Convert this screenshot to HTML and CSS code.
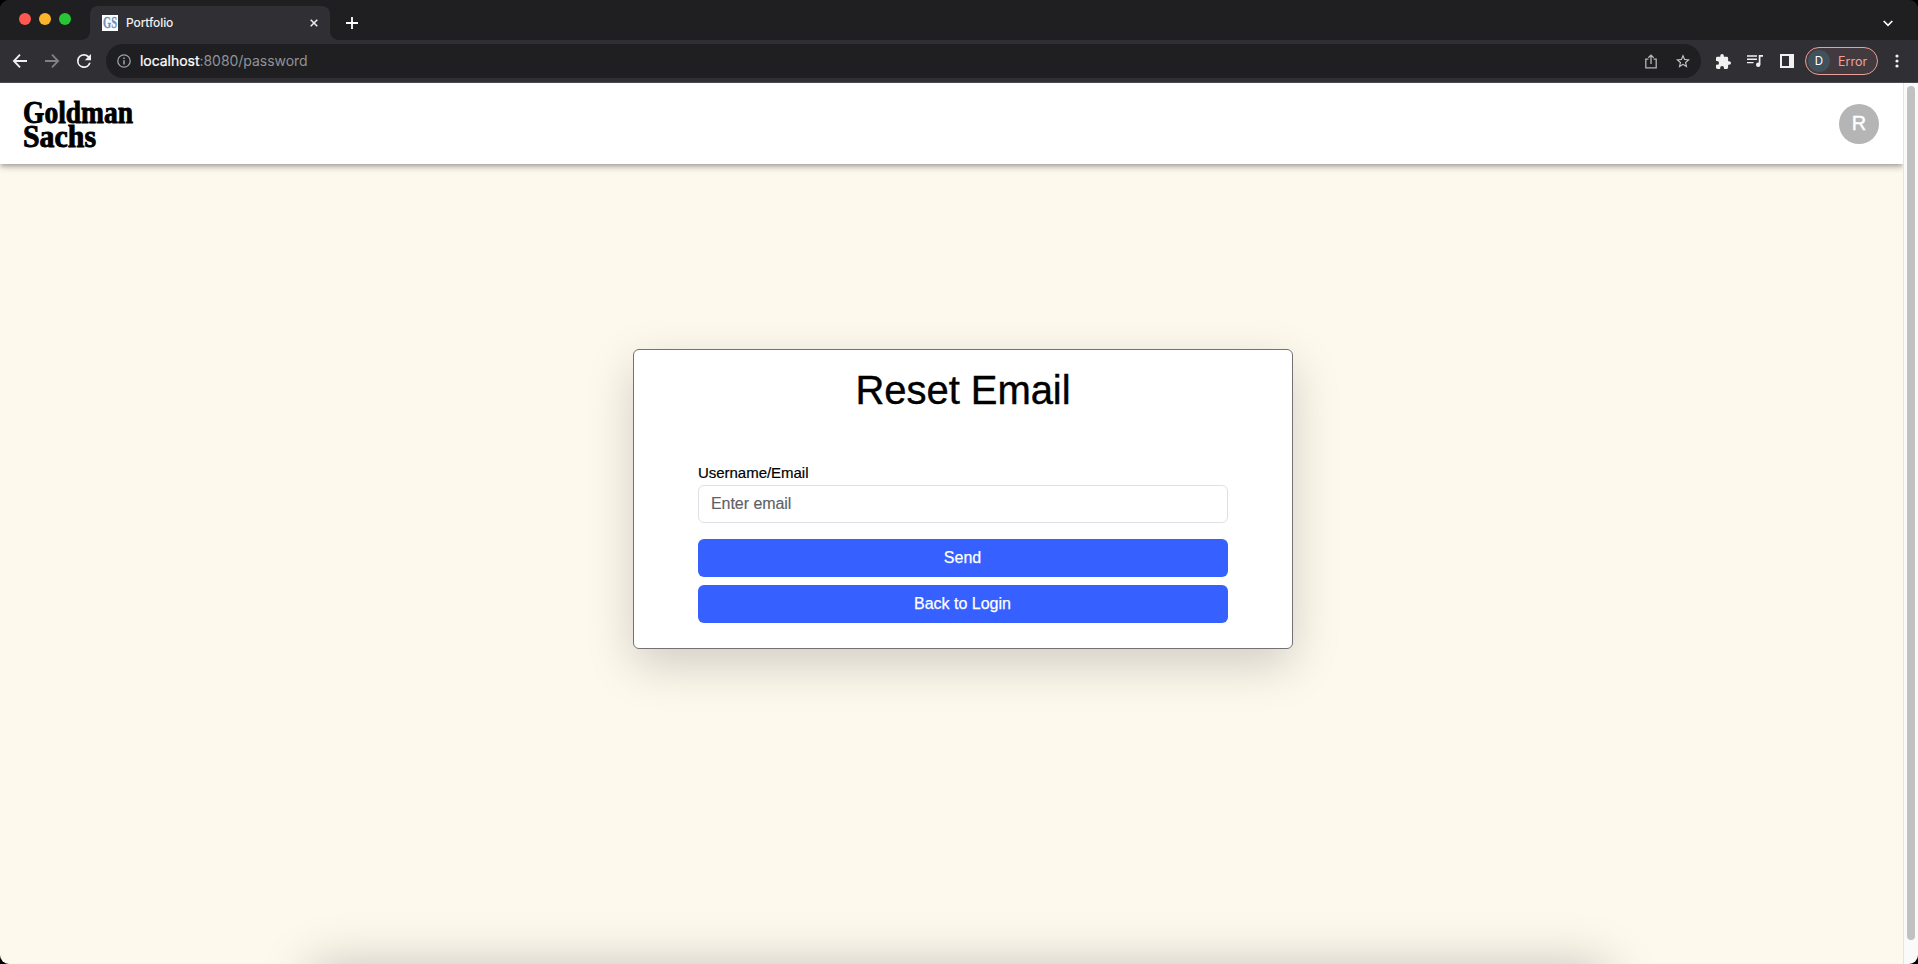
FILE: index.html
```html
<!DOCTYPE html>
<html lang="en">
<head>
<meta charset="utf-8">
<title>Portfolio</title>
<link rel="stylesheet" href="styles.css">
</head>
<body>
<div class="window">
  <div class="tabstrip">
    <div class="lights"><span class="light red"></span><span class="light yellow"></span><span class="light green"></span></div>
    <div class="tab">
      <svg class="favicon" viewBox="0 0 16 16"><rect width="16" height="16" fill="#fff"/><text x="1" y="13.4" textLength="14" lengthAdjust="spacingAndGlyphs" class="favicon-text">GS</text></svg>
      <span class="tab-title">Portfolio</span>
      <svg class="tab-close" viewBox="0 0 8 8"><path d="M.7.7l6.6 6.6M7.3.7L.7 7.3" stroke="#e8eaed" stroke-width="1.6"/></svg>
    </div>
    <svg class="new-tab" viewBox="0 0 12 12"><path d="M6 0v12M0 6h12" stroke="#fff" stroke-width="1.8"/></svg>
    <svg class="chevron" viewBox="0 0 10 7"><path d="M.7 1L5 5.3 9.3 1" fill="none" stroke="#fff" stroke-width="1.7"/></svg>
  </div>
  <div class="toolbar">
    <svg class="nav-icon" viewBox="0 0 14 14"><path d="M14 7H1.2M7 .7L.9 7 7 13.3" fill="none" stroke="#f1f1f2" stroke-width="1.8"/></svg>
    <svg class="nav-icon" viewBox="0 0 14 14"><path d="M0 7h12.8M7 .7L13.1 7 7 13.3" fill="none" stroke="#828286" stroke-width="1.8"/></svg>
    <svg class="nav-icon reload" viewBox="4 4 16 16"><path fill="#f1f1f2" d="M17.65 6.35A7.96 7.96 0 0 0 12 4a8 8 0 1 0 7.73 10h-2.08A6 6 0 1 1 12 6c1.66 0 3.14.69 4.22 1.78L13 11h7V4z"/></svg>
    <div class="omnibox">
      <svg class="info" viewBox="0 0 14 14"><circle cx="7" cy="7" r="6.2" fill="none" stroke="#9aa0a6" stroke-width="1.3"/><path d="M7 6.2v4.2M7 3.5v1.6" stroke="#9aa0a6" stroke-width="1.6"/></svg>
      <span class="url"><span class="host">localhost</span>:8080/password</span>
      <svg class="share" viewBox="0 0 12 15"><path d="M3.4 5.2H.8v8.6h10.4V5.2H8.6M6 10V1.2M3.3 3.8L6 1.1l2.7 2.7" fill="none" stroke="#b4b5b8" stroke-width="1.3"/></svg>
      <svg class="star" viewBox="2 2 20 19"><path fill="#c4c5c8" d="M22 9.24l-7.19-.62L12 2 9.19 8.63 2 9.24l5.46 4.73L5.82 21 12 17.27 18.18 21l-1.63-7.03zM12 15.4l-3.76 2.27 1-4.28-3.32-2.88 4.38-.38L12 6.1l1.71 4.04 4.38.38-3.32 2.88 1 4.28z"/></svg>
    </div>
    <svg class="puzzle" viewBox="2 1 21 21"><path fill="#f1f1f2" d="M20.5 11H19V7a2 2 0 0 0-2-2h-4V3.5a2.5 2.5 0 0 0-5 0V5H4a2 2 0 0 0-2 2v3.8h1.5a2.7 2.7 0 0 1 0 5.4H2V20a2 2 0 0 0 2 2h3.8v-1.5a2.7 2.7 0 0 1 5.4 0V22H17a2 2 0 0 0 2-2v-4h1.5a2.5 2.5 0 0 0 0-5z"/></svg>
    <svg class="queue" viewBox="0 0 16 12"><path d="M0 1h10M0 4.3h10M0 7.6h6.5" stroke="#f1f1f2" stroke-width="1.4"/><path d="M12.6 9.6V.9H16" fill="none" stroke="#f1f1f2" stroke-width="1.7"/><circle cx="11.2" cy="9.7" r="2.2" fill="#f1f1f2"/></svg>
    <svg class="panel" viewBox="0 0 14 14"><path fill="#f1f1f2" fill-rule="evenodd" d="M0 0h14v14H0zM2 2v10h7V2z"/></svg>
    <div class="profile"><span class="initial">D</span><span class="error">Error</span></div>
    <svg class="more" viewBox="0 0 4 14"><circle cx="2" cy="2" r="1.6" fill="#f1f1f2"/><circle cx="2" cy="7" r="1.6" fill="#f1f1f2"/><circle cx="2" cy="12" r="1.6" fill="#f1f1f2"/></svg>
  </div>
  <div class="viewport">
    <div class="page">
      <header class="header">
        <svg class="logo" viewBox="0 0 112 52" role="img" aria-label="Goldman Sachs">
          <text x="0" y="24.5" textLength="110" lengthAdjust="spacingAndGlyphs">Goldman</text>
          <text x="0" y="48.5" textLength="73" lengthAdjust="spacingAndGlyphs">Sachs</text>
        </svg>
        <span class="avatar">R</span>
      </header>
      <main class="main">
        <form class="card">
          <h1 class="title">Reset Email</h1>
          <label class="label" for="email">Username/Email</label>
          <input class="field" id="email" type="email" placeholder="Enter email">
          <button class="button send" type="button">Send</button>
          <button class="button" type="button">Back to Login</button>
        </form>
      </main>
      <div class="next-panel"></div>
    </div>
    <div class="scrollbar"><div class="thumb"></div></div>
  </div>
</div>
</body>
</html>
```
FILE: styles.css
```css
* { box-sizing: border-box; }
html, body { margin: 0; height: 100%; overflow: hidden; background: #000; }
svg { display: block; flex: none; overflow: visible; }
.window { display: flex; flex-direction: column; width: 1918px; height: 964px; border-radius: 9px; overflow: hidden; background: #1f1f22; }

.tabstrip { display: flex; height: 40px; padding: 6px 25px 0 19px; background: #1f1f22; font-family: Inter, sans-serif; }
.lights { display: flex; gap: 8px; margin: 7px 19px 0 0; }
.light { width: 12px; height: 12px; border-radius: 50%; }
.red { background: #fe5850; }
.yellow { background: #fcb52a; }
.green { background: #28c537; }
.tab { position: relative; display: flex; align-items: center; width: 240px; height: 34px; padding: 0 12px; border-radius: 8px 8px 0 0; background: #303034; color: #f1f1f2; }
.tab::before, .tab::after { content: ""; position: absolute; bottom: 0; width: 8px; height: 8px; }
.tab::before { left: -8px; background: radial-gradient(circle at 0 0, #1f1f22 7.5px, #303034 8px); }
.tab::after { right: -8px; background: radial-gradient(circle at 100% 0, #1f1f22 7.5px, #303034 8px); }
.favicon { width: 16px; height: 16px; }
.favicon-text { font: bold 16px "Liberation Serif", serif; fill: #6f8fc0; stroke: #6f8fc0; stroke-width: .3px; }
.tab-title { margin-left: 8px; padding-bottom: 2px; font-size: 12px; font-weight: 500; letter-spacing: -.12px; }
.tab-close { width: 8px; height: 8px; margin-left: auto; }
.new-tab { width: 12px; height: 12px; margin: 11px 0 0 16px; }
.chevron { width: 10px; height: 7px; margin: 14px 0 0 auto; }

.toolbar { display: flex; align-items: center; height: 43px; padding: 1px 19px 1px 13px; background: #303034; border-bottom: 1px solid #4b4b4f; font-family: Inter, sans-serif; }
.nav-icon { width: 14px; height: 14px; margin-right: 18px; }
.reload { margin-right: 15px; }
.omnibox { display: flex; align-items: center; width: 1595px; height: 34px; padding: 0 11px; border-radius: 17px; background: #1f1f22; margin-right: 15px; }
.info { width: 14px; height: 14px; }
.url { margin-left: 9px; padding-bottom: 2px; color: #929297; font-size: 14px; letter-spacing: -.04px; }
.host { color: #fff; -webkit-text-stroke: .2px #fff; }
.share { width: 12px; height: 15px; margin-left: auto; }
.star { width: 14px; height: 14px; margin-left: 19px; }
.puzzle { width: 15px; height: 15px; }
.queue { width: 16px; height: 12px; margin-left: 16px; }
.panel { width: 14px; height: 14px; margin-left: 17px; }
.profile { display: flex; align-items: center; width: 73px; height: 28px; margin-left: 11px; padding-left: 2px; border: 1px solid #eb9f9a; border-radius: 14px; background: #423a3e; }
.initial { width: 22px; height: 22px; border-radius: 50%; background: #40525d; color: #fff; font-size: 11.5px; line-height: 22px; text-align: center; }
.error { margin-left: 8px; color: #f2a09a; font-size: 12.5px; }
.more { width: 4px; height: 14px; margin-left: auto; }

.viewport { display: flex; flex: 1; min-height: 0; }
.page { position: relative; flex: 1; display: flex; flex-direction: column; overflow: hidden; background: #fef9ed; font-family: "Liberation Sans", Arial, sans-serif; }
.header { position: relative; display: flex; align-items: center; justify-content: space-between; flex: none; height: 81px; padding: 0 24px 0 23px; background: #fff; box-shadow: 0 2px 4px -1px rgba(0,0,0,.2), 0 4px 5px rgba(0,0,0,.14), 0 1px 10px rgba(0,0,0,.12); }
.logo { width: 112px; height: 52px; font: bold 31px "Liberation Serif", serif; fill: #000; stroke: #000; stroke-width: .9px; }
.avatar { width: 40px; height: 40px; border-radius: 50%; background: #b5b5b5; color: #fff; font-size: 20px; line-height: 39px; text-align: center; -webkit-text-stroke: .4px #fff; }
.main { flex: 1; padding: 185px 0 0 633px; }
.card { display: flex; flex-direction: column; width: 660px; height: 300px; padding: 16px 64px; border: 1px solid #727272; border-radius: 6px; background: #fff; box-shadow: 0 16px 48px rgba(0,0,0,.175); }
.title { margin: 0 0 46px; font-size: 40px; font-weight: 400; line-height: 48px; text-align: center; letter-spacing: -.05px; -webkit-text-stroke: .4px #000; }
.label { height: 25px; font-size: 15px; line-height: 26px; letter-spacing: -.03px; -webkit-text-stroke: .2px #000; }
.field { width: 530px; height: 38px; margin: 0 0 16px; padding: 0 12px; border: 1px solid #dee0e6; border-radius: 6px; background: #fff; font: 16px "Liberation Sans", Arial, sans-serif; letter-spacing: -.05px; }
.field::placeholder { color: #606164; opacity: 1; -webkit-text-stroke: .15px #606164; }
.button { height: 38px; padding: 0 1px 1px 0; border: 0; border-radius: 6px; background: #3660ff; color: #fff; font: 16px "Liberation Sans", Arial, sans-serif; -webkit-text-stroke: .25px #fff; }
.send { margin-bottom: 8px; }
.next-panel { position: absolute; top: 100%; left: 311px; width: 1296px; height: 300px; margin-top: 1px; box-shadow: 0 0 48px rgba(0,0,0,.22); }
.scrollbar { width: 15px; padding: 3px 3px 0; border-left: 1px solid #e4e4e4; background: #fafafa; }
.thumb { width: 8px; height: 854px; border-radius: 4px; background: #c1c1c1; }
```
